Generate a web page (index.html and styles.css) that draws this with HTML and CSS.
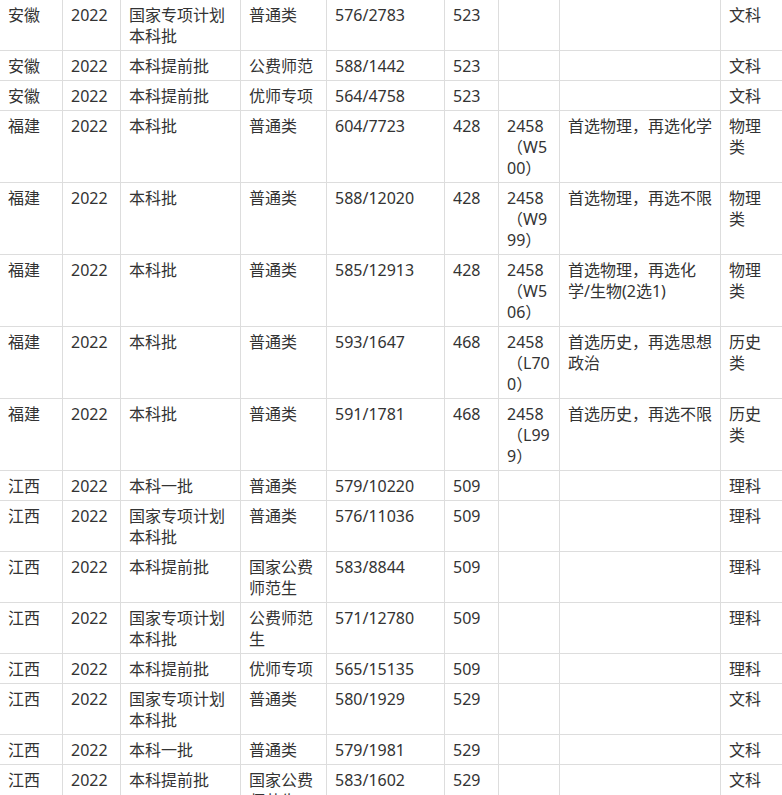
FILE: index.html
```html
<!DOCTYPE html>
<html lang="zh-CN">
<head>
<meta charset="utf-8">
<title>分数线</title>
<link rel="stylesheet" href="styles.css">
</head>
<body>
<table class="score-table">
  <colgroup>
    <col class="c-prov"><col class="c-year"><col class="c-batch"><col class="c-type"><col class="c-rank"><col class="c-line"><col class="c-code"><col class="c-req"><col class="c-subj">
  </colgroup>
  <tbody>
    <tr><td>安徽</td><td>2022</td><td>国家专项计划本科批</td><td>普通类</td><td>576/2783</td><td>523</td><td></td><td></td><td>文科</td></tr>
    <tr><td>安徽</td><td>2022</td><td>本科提前批</td><td>公费师范</td><td>588/1442</td><td>523</td><td></td><td></td><td>文科</td></tr>
    <tr><td>安徽</td><td>2022</td><td>本科提前批</td><td>优师专项</td><td>564/4758</td><td>523</td><td></td><td></td><td>文科</td></tr>
    <tr><td>福建</td><td>2022</td><td>本科批</td><td>普通类</td><td>604/7723</td><td>428</td><td>2458（W500）</td><td>首选物理，再选化学</td><td>物理类</td></tr>
    <tr><td>福建</td><td>2022</td><td>本科批</td><td>普通类</td><td>588/12020</td><td>428</td><td>2458（W999）</td><td>首选物理，再选不限</td><td>物理类</td></tr>
    <tr><td>福建</td><td>2022</td><td>本科批</td><td>普通类</td><td>585/12913</td><td>428</td><td>2458（W506）</td><td>首选物理，再选化学/生物(2选1)</td><td>物理类</td></tr>
    <tr><td>福建</td><td>2022</td><td>本科批</td><td>普通类</td><td>593/1647</td><td>468</td><td>2458（L700）</td><td>首选历史，再选思想政治</td><td>历史类</td></tr>
    <tr><td>福建</td><td>2022</td><td>本科批</td><td>普通类</td><td>591/1781</td><td>468</td><td>2458（L999）</td><td>首选历史，再选不限</td><td>历史类</td></tr>
    <tr><td>江西</td><td>2022</td><td>本科一批</td><td>普通类</td><td>579/10220</td><td>509</td><td></td><td></td><td>理科</td></tr>
    <tr><td>江西</td><td>2022</td><td>国家专项计划本科批</td><td>普通类</td><td>576/11036</td><td>509</td><td></td><td></td><td>理科</td></tr>
    <tr><td>江西</td><td>2022</td><td>本科提前批</td><td>国家公费师范生</td><td>583/8844</td><td>509</td><td></td><td></td><td>理科</td></tr>
    <tr><td>江西</td><td>2022</td><td>国家专项计划本科批</td><td>公费师范生</td><td>571/12780</td><td>509</td><td></td><td></td><td>理科</td></tr>
    <tr><td>江西</td><td>2022</td><td>本科提前批</td><td>优师专项</td><td>565/15135</td><td>509</td><td></td><td></td><td>理科</td></tr>
    <tr><td>江西</td><td>2022</td><td>国家专项计划本科批</td><td>普通类</td><td>580/1929</td><td>529</td><td></td><td></td><td>文科</td></tr>
    <tr><td>江西</td><td>2022</td><td>本科一批</td><td>普通类</td><td>579/1981</td><td>529</td><td></td><td></td><td>文科</td></tr>
    <tr><td>江西</td><td>2022</td><td>本科提前批</td><td>国家公费师范生</td><td>583/1602</td><td>529</td><td></td><td></td><td>文科</td></tr>
  </tbody>
</table>
</body>
</html>
```

FILE: styles.css
```css
html, body {
  margin: 0;
  padding: 0;
  background: #fff;
  overflow: hidden;
}

.score-table {
  border-collapse: collapse;
  table-layout: fixed;
  width: 791px;
  margin: -1px 0 0 -1px;
  font-family: "Noto Sans", "Noto Sans CJK SC", sans-serif;
  font-size: 16px;
  line-height: 21px;
  color: #333;
  text-spacing-trim: space-all;
}

.score-table td {
  border: 1px solid #ddd;
  padding: 5px 7px 3px 8px;
  vertical-align: top;
  text-align: left;
  word-break: break-all;
}

.score-table td:last-child {
  padding-right: 20px;
}

.c-prov { width: 63px; }
.c-year { width: 58px; }
.c-batch { width: 120px; }
.c-type { width: 86px; }
.c-rank { width: 118px; }
.c-line { width: 54px; }
.c-code { width: 61px; }
.c-req { width: 161px; }
.c-subj { width: 70px; }
```
